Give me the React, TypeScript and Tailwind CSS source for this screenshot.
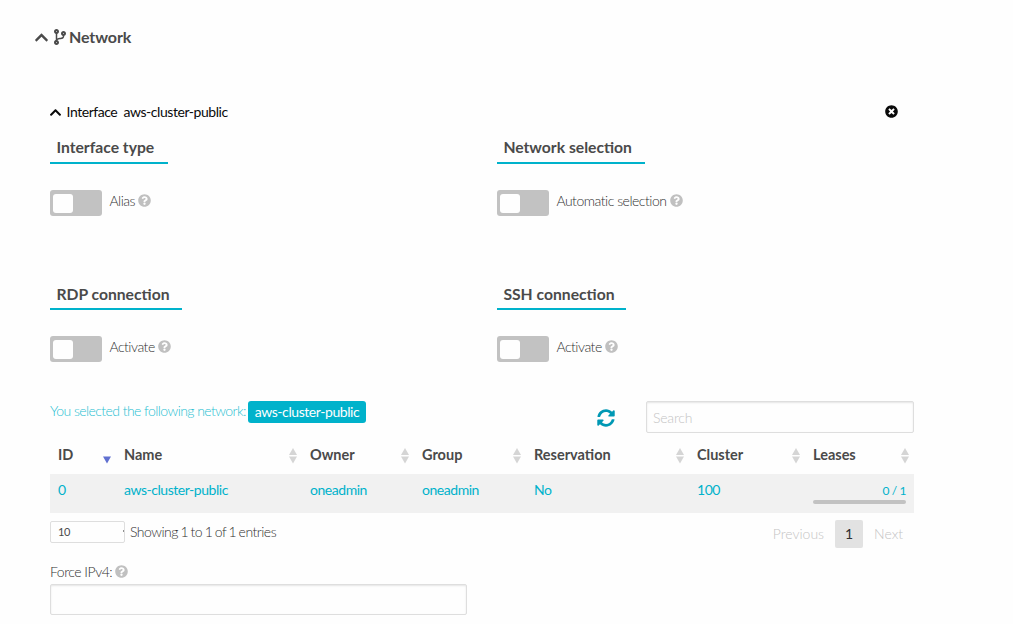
import React from "react";
import { FaChevronUp, FaCodeBranch, FaQuestionCircle, FaSyncAlt, FaTimesCircle } from "react-icons/fa";

function Help() {
  return <FaQuestionCircle className="-mt-px size-[13px] text-[#c0c0c0]" />;
}

function Toggle({ title, label, width, titlePadding }: { title: string; label: string; width: string; titlePadding: string }) {
  return (
    <section className="flex flex-col items-start">
      <h3 className={`h-[29px] border-b-2 border-[#00b2cb] pl-[6.4px] text-[15.7px] leading-6 font-bold whitespace-nowrap ${titlePadding} ${width}`}>
        {title}
      </h3>
      <div className="mt-[26px] flex h-[26px]">
        <span className="flex h-[26px] w-[52px] items-center rounded-[3px] bg-[#c2c2c2] pl-[3px]">
          <span className="h-[19px] w-5 rounded-[3px] bg-[#fefefe]" />
        </span>
        <label className="ml-[7.4px] flex h-[22px] items-center gap-[3px] text-[14px] leading-5 font-light tracking-[-0.48px] text-[#303030]">
          <span>{label}</span>
          <Help />
        </label>
      </div>
    </section>
  );
}

function Sort({ active = false }: { active?: boolean }) {
  return (
    <svg viewBox="0 0 8 16" className="mr-[5.5px] h-4 w-2 shrink-0">
      {!active && <path d="M0 7 4 0l4 7Z" fill="#d5d5d5" />}
      <path d="M0 8.5h8L4 15.5Z" fill={active ? "#6070d0" : "#d5d5d5"} />
    </svg>
  );
}

const columns = ["ID", "Name", "Owner", "Group", "Reservation", "Cluster", "Leases"];
const row = ["0", "aws-cluster-public", "oneadmin", "oneadmin", "No", "100"];
const grid = "grid grid-cols-[66px_186px_112px_112px_163px_116px_109px]";

export default function App() {
  return (
    <main className="h-[624px] w-[1013px] overflow-hidden bg-[#fefefe] font-['Lato',sans-serif] text-[14px] text-[#4a4a4a]">
      <header className="flex h-[74px] items-center pl-[34px] text-[16px] font-bold">
        <FaChevronUp className="size-[15px]" />
        <FaCodeBranch className="ml-[3px] size-4" />
        <h2 className="ml-px tracking-[-0.1px]">Network</h2>
      </header>
      <div className="ml-[50px] w-[864px]">
        <div className="mt-[26px] flex h-6 items-center text-[14px] tracking-[-0.44px] text-[#0a0a0a]">
          <FaChevronUp className="-ml-px size-[13px]" />
          <span className="-mt-0.5 ml-[4.5px] w-[57px]">Interface</span>
          <span className="-mt-0.5">aws-cluster-public</span>
          <FaTimesCircle className="-mt-px mr-4 ml-auto size-[13px]" />
        </div>
        <div className="mt-[11px] grid grid-cols-[447px_417px]">
          <Toggle title="Interface type" label="Alias" width="w-[118px]" titlePadding="pt-0" />
          <Toggle title="Network selection" label="Automatic selection" width="w-[148px]" titlePadding="pt-0" />
        </div>
        <div className="mt-[65px] grid grid-cols-[447px_417px]">
          <Toggle title="RDP connection" label="Activate" width="w-[132px]" titlePadding="pt-px" />
          <Toggle title="SSH connection" label="Activate" width="w-[129px]" titlePadding="pt-px" />
        </div>
        <div className="mt-[39px] flex h-8 items-start">
          <span className="w-[195px] text-[14px] leading-5 font-light tracking-[-0.56px] whitespace-nowrap text-[#28bfd2]">
            You selected the following network:
          </span>
          <span className="ml-[3px] h-[22px] w-[118px] rounded-[3px] bg-[#00b2cb] text-center text-[14px] leading-[22px] tracking-[-0.42px] text-[#fefefe]">
            aws-cluster-public
          </span>
          <FaSyncAlt className="mt-[7.5px] mr-[31.5px] ml-auto size-[18px] text-[#0098b4]" />
          <input
            placeholder="Search"
            className="h-8 w-[268px] rounded-[2px] border border-[#dedede] bg-[#fefefe] px-1.5 text-[14px] font-light tracking-[-0.2px] shadow-[inset_0_1px_2px_rgba(10,10,10,0.1)] placeholder:text-[#c4c4c4]"
          />
        </div>
        <div className={`${grid} h-[41px] text-[14.5px] font-bold`}>
          {columns.map((name, index) => (
            <div key={name} className="flex items-center justify-between pt-0.5 pl-2">
              <span>{name}</span>
              <span className="mt-[3px] flex"><Sort active={index === 0} /></span>
            </div>
          ))}
        </div>
        <div className={`${grid} h-[39px] bg-[#f1f1f1] text-[14px] tracking-[-0.46px] text-[#00b2cb]`}>
          {row.map((value, index) => (
            <div key={index} className="pl-2 leading-8">{value}</div>
          ))}
          <div className="px-2 pt-2">
            <div className="text-right text-[12px] leading-[17px] tracking-[-0.4px]">0 / 1</div>
            <div className="mt-px h-1 rounded-sm bg-[#c2c2c2]" />
          </div>
        </div>
        <div className="flex h-[49px] items-start">
          <div className="mt-2 flex h-[22px] w-[75px] justify-between overflow-hidden rounded-[2px] border border-[#dedede] pl-[7px] text-[11px] leading-5 tracking-[-0.4px]">
            <span>10</span>
            <span className="mt-2 h-0.5 w-px bg-[#909090]" />
          </div>
          <span className="mt-2 ml-[5px] leading-[22px] font-light tracking-[-0.5px] text-[#303030] [word-spacing:-0.8px]">
            Showing 1 to 1 of 1 entries
          </span>
          <div className="mt-[7px] mr-[11px] ml-auto flex leading-7 font-light text-[#c4c4c4]">
            <span>Previous</span>
            <span className="mr-[11px] ml-[11px] h-7 w-7 rounded-[2px] bg-[#e2e2e2] text-center font-normal text-[#303030]">1</span>
            <span>Next</span>
          </div>
        </div>
        <label className="flex h-[22px] items-center gap-[3px] leading-5 font-light tracking-[-0.48px] text-[#303030]">
          <span className="-mt-0.5">Force IPv4:</span>
          <span className="-mt-0.5 flex"><Help /></span>
        </label>
        <input className="block h-[31px] w-[417px] rounded-[2px] border border-[#dedede] bg-[#fefefe] px-2 shadow-[inset_0_1px_2px_rgba(10,10,10,0.1)]" />
      </div>
    </main>
  );
}
